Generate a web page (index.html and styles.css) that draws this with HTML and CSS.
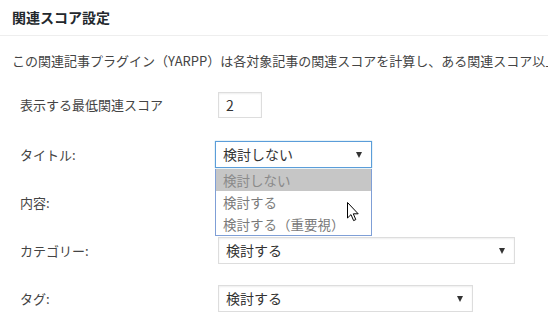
FILE: index.html
```html
<!DOCTYPE html>
<html lang="ja">
<head>
    <meta charset="UTF-8">
    <title>関連スコア設定</title>
    <link rel="stylesheet" href="styles.css">
</head>
<body>
    <div class="panel">
        <h2 class="panel-title">関連スコア設定</h2>

        <p class="desc">この関連記事プラグイン（YARPP）は各対象記事の関連スコアを計算し、ある関連スコア以上の記事を関連記事として表示します。</p>

        <div class="form">
            <div class="row row-first">
                <label class="label">表示する最低関連スコア</label>
                <input class="num" type="text" value="2">
            </div>

            <div class="row">
                <label class="label">タイトル:</label>
                <div class="select-wrap">
                    <div class="select select-focus" style="width: 157px;">検討しない</div>
                    <!-- 開いているドロップダウン -->
                    <ul class="dropdown">
                        <li class="active">検討しない</li>
                        <li>検討する</li>
                        <li>検討する（重要視）</li>
                    </ul>
                    <svg class="cursor" width="13" height="20" viewBox="0 0 13 20">
                        <path d="M0.5 0.5 L0.5 16 L4 12.6 L6.6 18.6 L8.8 17.6 L6.3 11.8 L11.2 11.8 Z" fill="#fff" stroke="#000" stroke-width="1" stroke-linejoin="miter"/>
                    </svg>
                </div>
            </div>

            <div class="row">
                <label class="label">内容:</label>
                <!-- ドロップダウンの下に隠れている -->
                <div class="select" style="width: 150px;"></div>
            </div>

            <div class="row">
                <label class="label">カテゴリー:</label>
                <div class="select" style="width: 297px;">検討する</div>
            </div>

            <div class="row">
                <label class="label">タグ:</label>
                <div class="select" style="width: 255px;">検討する</div>
            </div>
        </div>
    </div>
</body>
</html>
```

FILE: styles.css
```css
body {
    margin: 0;
    background: #fff;
    font-family: "Noto Sans CJK JP", "Noto Sans", sans-serif;
    color: #444;
    overflow: hidden;
}

.panel {
    width: 548px;
    overflow: hidden;
}

.panel-title {
    margin: 0;
    height: 35px;
    padding: 0 12px;
    line-height: 35px;
    font-size: 14px;
    font-weight: bold;
    color: #23282d;
    border-bottom: 1px solid #eee;
}

.desc {
    margin: 15px 0 0;
    padding-left: 12px;
    font-size: 13px;
    line-height: 20px;
    white-space: nowrap;
    overflow: hidden;
    color: #444;
}

.form {
    margin-top: 20px;
    padding-left: 20px;
}

.row {
    display: flex;
    align-items: center;
    height: 27px;
    margin-bottom: 21px;
}

.row-first {
    margin-bottom: 23px;
}

.label {
    width: 198px;
    font-size: 13px;
    color: #444;
}

.num {
    box-sizing: border-box;
    width: 44px;
    height: 26px;
    margin: 0;
    padding: 0 7px;
    border: 1px solid #ddd;
    box-shadow: inset 0 1px 2px rgba(0, 0, 0, 0.07);
    font-family: inherit;
    font-size: 14px;
    color: #333;
    outline: none;
}

.select {
    box-sizing: border-box;
    position: relative;
    height: 27px;
    padding: 0 20px 0 7px;
    border: 1px solid #ddd;
    box-shadow: inset 0 1px 2px rgba(0, 0, 0, 0.07);
    background: #fff;
    font-size: 14px;
    line-height: 25px;
    color: #333;
}

.select::after {
    content: "";
    position: absolute;
    right: 9px;
    top: 10px;
    border-left: 3.5px solid transparent;
    border-right: 3.5px solid transparent;
    border-top: 6px solid #333;
}

.select-wrap {
    position: relative;
    margin-left: -3px;
}

.select-focus {
    border-color: #5b9dd9;
    box-shadow: 0 0 1px rgba(30, 140, 190, 0.6);
}

.dropdown {
    position: absolute;
    top: 28px;
    left: 0;
    z-index: 2;
    box-sizing: border-box;
    width: 157px;
    margin: 0;
    padding: 0;
    list-style: none;
    background: #fff;
    border: 1px solid #7f9fd6;
    border-top: none;
}

.dropdown li {
    height: 22px;
    padding-left: 7px;
    font-size: 13.5px;
    line-height: 22px;
    color: #7a7a7a;
}

.dropdown li.active {
    background: #c6c6c6;
    color: #8a8a8a;
}

.cursor {
    position: absolute;
    left: 132px;
    top: 61px;
    z-index: 3;
}
```
